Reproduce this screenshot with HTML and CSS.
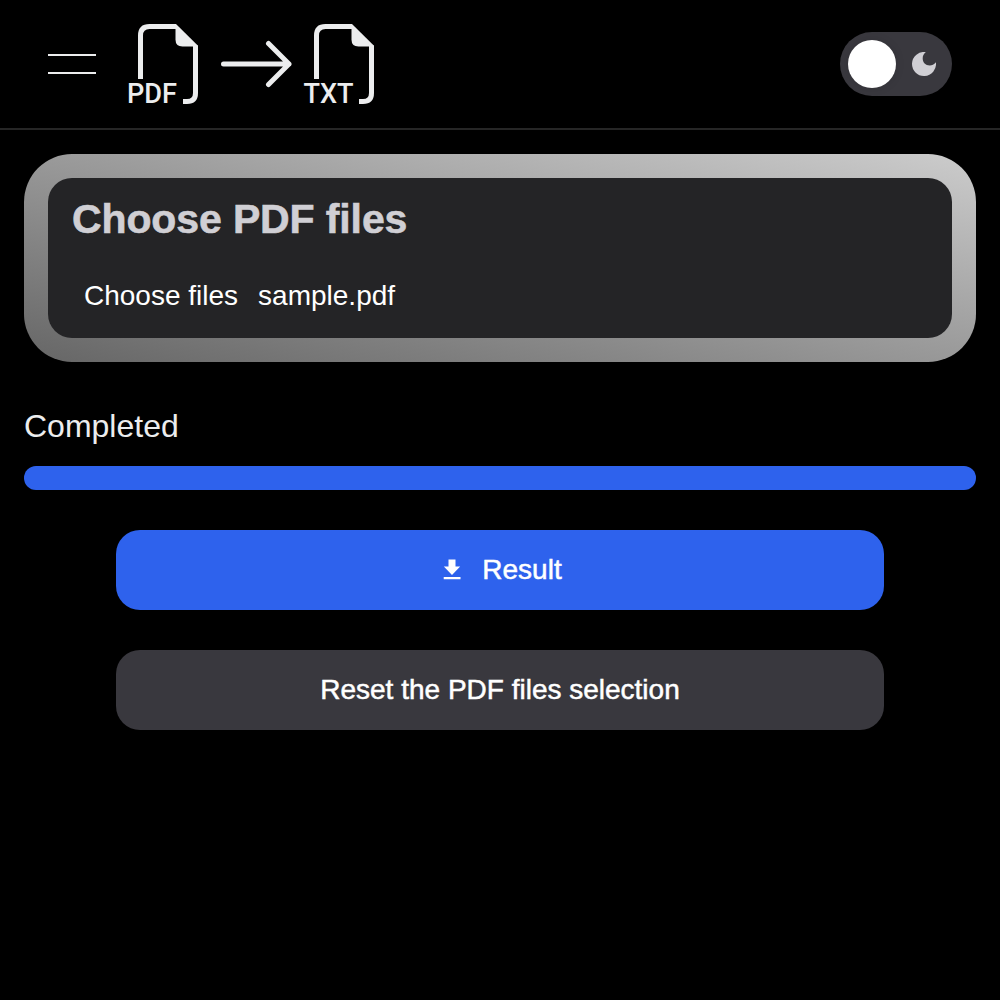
FILE: index.html
```html
<!DOCTYPE html>
<html lang="en">
<head>
<meta charset="utf-8">
<title>PDF to TXT</title>
<link rel="stylesheet" href="styles.css">
</head>
<body>
<header class="navbar">
  <button class="menu" aria-label="Open menu"><span class="menu-line"></span><span class="menu-line"></span></button>
  <svg class="logo" viewBox="0 0 256 88" role="img" aria-label="PDF to TXT">
    <defs>
      <g id="file">
        <path class="outline" d="M13.500 59V15.500q0-9 9-9H49M68.500 25.500V73q0 8.500-8.500 8.500H56"/>
        <path class="solid" d="M48.500 4H49L71 25.800V26.500H55.500q-7 0-7-7Z"/>
      </g>
    </defs>
    <use href="#file"/>
    <text class="logo-text" x="0" y="83" textLength="50" lengthAdjust="spacingAndGlyphs">PDF</text>
    <path class="arrow" d="M96.500 44H162M141.500 23.500L162 44L141.500 64.500"/>
    <use href="#file" x="176"/>
    <text class="logo-text" x="176.500" y="83" textLength="50" lengthAdjust="spacingAndGlyphs">TXT</text>
  </svg>
  <button class="switch" aria-label="Toggle theme">
    <span class="thumb"></span>
    <svg class="moon" viewBox="0 0 24 24" aria-hidden="true"><path d="M13.800 .1A12 12 0 1 0 23.900 10.300C22 12.800 20 13.500 17.800 13.500C13.500 13.500 10.700 10.500 10.700 6.500C10.700 4 11.600 2 13.800 .1Z"/></svg>
  </button>
</header>
<main class="content">
  <section class="frame">
    <div class="picker">
      <h1 class="title">Choose PDF files</h1>
      <div class="file-row"><span>Choose files</span><span>sample.pdf</span></div>
    </div>
  </section>
  <p class="status">Completed</p>
  <div class="progress"></div>
  <div class="actions">
    <button class="button primary">
      <svg class="download" viewBox="0 0 24 24" aria-hidden="true"><path d="M19 9h-4V3H9v6H5l7 7.200zM4.900 18v2h14.400v-2z"/></svg>
      <span>Result</span>
    </button>
    <button class="button secondary">Reset the PDF files selection</button>
  </div>
</main>
</body>
</html>
```
FILE: styles.css
```css
* { box-sizing: border-box; }
body {
  margin: 0;
  min-height: 100vh;
  background: #000;
  color: #ecedee;
  font-family: "Liberation Sans", Arial, sans-serif;
}
button { border: 0; font: inherit; }
.navbar {
  display: flex;
  align-items: center;
  height: 130px;
  padding: 0 48px;
  border-bottom: 2px solid #262626;
}
.menu {
  display: flex;
  flex-direction: column;
  gap: 16px;
  width: 48px;
  padding: 0;
  background: none;
}
.menu-line { height: 2px; background: #ecedee; }
.logo {
  width: 256px;
  height: 88px;
  margin: 0 auto 0 31px;
  overflow: visible;
}
.outline, .arrow { fill: none; stroke: #ecedee; stroke-width: 5; }
.solid { fill: #ecedee; }
.arrow { stroke-linecap: round; stroke-linejoin: round; }
.logo-text { fill: #ecedee; font: 500 28px Roboto, sans-serif; }
.switch {
  display: flex;
  align-items: center;
  gap: 16px;
  width: 112px;
  height: 64px;
  padding: 8px;
  border-radius: 32px;
  background: #39383e;
}
.thumb {
  width: 48px;
  height: 48px;
  border-radius: 50%;
  background: #fff;
  box-shadow: 0 0 10px rgba(0, 0, 0, .12);
}
.moon { width: 24px; height: 24px; fill: #d0cfd4; }
.content { padding: 24px; }
.frame {
  padding: 24px;
  border-radius: 48px;
  background: linear-gradient(to top right, #666, #ccc);
}
.picker {
  height: 160px;
  padding: 16px 24px;
  border-radius: 24px;
  background: #242426;
}
.title {
  margin: 0;
  color: #d0cfd4;
  font-size: 41px;
  line-height: 50px;
  letter-spacing: -.12px;
  -webkit-text-stroke: .6px #d0cfd4;
}
.file-row {
  display: flex;
  gap: 20px;
  margin-top: 32px;
  padding-left: 12px;
  color: #fff;
  font-size: 28px;
  line-height: 40px;
}
.status { margin: 40px 0 16px; font-size: 32px; line-height: 48px; }
.progress { height: 24px; border-radius: 12px; background: #2e62ed; }
.actions {
  display: flex;
  flex-direction: column;
  gap: 40px;
  margin: 40px 92px 0;
}
.button {
  display: flex;
  justify-content: center;
  align-items: center;
  gap: 16px;
  height: 80px;
  border-radius: 24px;
  color: #fff;
  font-size: 28px;
  -webkit-text-stroke: .5px #fff;
}
.primary { background: #2e62ed; }
.secondary { background: #39383e; }
.download { width: 28px; height: 28px; fill: #fff; }
```
